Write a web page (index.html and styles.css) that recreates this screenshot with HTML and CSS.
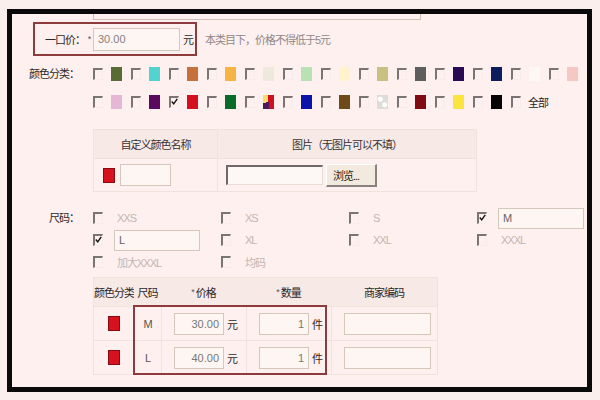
FILE: index.html
```html
<!DOCTYPE html>
<html lang="zh">
<head>
<meta charset="utf-8">
<title>发布宝贝</title>
<link rel="stylesheet" href="styles.css">
</head>
<body>
<div class="frame">
  <div class="cut"></div>

  <div class="price-row">
    <div class="price-box">
      <span class="pl">一口价：</span><span class="star">*</span>
      <div class="inp price-inp">30.00</div>
      <span class="unit">元</span>
    </div>
    <span class="hint">本类目下，价格不得低于5元</span>
  </div>

  <div class="field colors">
    <div class="flabel">颜色分类：</div>
    <div class="swatches">
      <div class="opt"><span class="cb"></span><span class="sw c01"></span></div>
      <div class="opt"><span class="cb"></span><span class="sw c02"></span></div>
      <div class="opt"><span class="cb"></span><span class="sw c03"></span></div>
      <div class="opt"><span class="cb"></span><span class="sw c04"></span></div>
      <div class="opt"><span class="cb"></span><span class="sw c05"></span></div>
      <div class="opt"><span class="cb"></span><span class="sw c06"></span></div>
      <div class="opt"><span class="cb"></span><span class="sw c07"></span></div>
      <div class="opt"><span class="cb"></span><span class="sw c08"></span></div>
      <div class="opt"><span class="cb"></span><span class="sw c09"></span></div>
      <div class="opt"><span class="cb"></span><span class="sw c10"></span></div>
      <div class="opt"><span class="cb"></span><span class="sw c11"></span></div>
      <div class="opt"><span class="cb"></span><span class="sw c12"></span></div>
      <div class="opt"><span class="cb"></span><span class="sw c13"></span></div>

      <div class="opt"><span class="cb"></span><span class="sw c14"></span></div>
      <div class="opt"><span class="cb"></span><span class="sw c15"></span></div>
      <div class="opt"><span class="cb on"><svg viewBox="0 0 9 9" width="9" height="9"><path d="M1 4.5 L3.5 7.5 L8 1" fill="none" stroke="#111" stroke-width="1.8"/></svg></span><span class="sw c16"></span></div>
      <div class="opt"><span class="cb"></span><span class="sw c17"></span></div>
      <div class="opt"><span class="cb"></span><span class="sw c18"></span></div>
      <div class="opt"><span class="cb"></span><span class="sw c19"></span></div>
      <div class="opt"><span class="cb"></span><span class="sw c20"></span></div>
      <div class="opt"><span class="cb"></span><span class="sw c21"></span></div>
      <div class="opt"><span class="cb"></span><span class="sw c22"></span></div>
      <div class="opt"><span class="cb"></span><span class="sw c23"></span></div>
      <div class="opt"><span class="cb"></span><span class="sw c24"></span></div>
      <div class="opt all"><span class="cb"></span><span class="all-label">全部</span></div>
    </div>
  </div>

  <div class="ctable">
    <div class="th">自定义颜色名称</div>
    <div class="th col2">图片（无图片可以不填）</div>
    <div class="td cell-name"><span class="rsw"></span><div class="inp name-inp"></div></div>
    <div class="td col2 cell-file"><div class="file"></div><div class="btn">浏览...</div></div>
  </div>

  <div class="field sizes">
    <div class="flabel">尺码：</div>
    <div class="sgrid">
      <div class="sopt"><span class="cb"></span><span class="slabel">XXS</span></div>
      <div class="sopt"><span class="cb"></span><span class="slabel">XS</span></div>
      <div class="sopt"><span class="cb"></span><span class="slabel">S</span></div>
      <div class="sopt"><span class="cb on"><svg viewBox="0 0 9 9" width="9" height="9"><path d="M1 4.5 L3.5 7.5 L8 1" fill="none" stroke="#111" stroke-width="1.8"/></svg></span><div class="inp sinp">M</div></div>
      <div class="sopt"><span class="cb on"><svg viewBox="0 0 9 9" width="9" height="9"><path d="M1 4.5 L3.5 7.5 L8 1" fill="none" stroke="#111" stroke-width="1.8"/></svg></span><div class="inp sinp">L</div></div>
      <div class="sopt"><span class="cb"></span><span class="slabel">XL</span></div>
      <div class="sopt"><span class="cb"></span><span class="slabel">XXL</span></div>
      <div class="sopt"><span class="cb"></span><span class="slabel">XXXL</span></div>
      <div class="sopt"><span class="cb"></span><span class="slabel">加大XXXL</span></div>
      <div class="sopt"><span class="cb"></span><span class="slabel">均码</span></div>
    </div>
  </div>

  <div class="btable">
    <div class="bh">颜色分类</div>
    <div class="bh">尺码</div>
    <div class="bh"><span class="req">*</span>价格</div>
    <div class="bh"><span class="req">*</span>数量</div>
    <div class="bh">商家编码</div>

    <div class="bd center"><span class="rsw"></span></div>
    <div class="bd center size-v">M</div>
    <div class="bd pad"><div class="inp num">30.00</div><span class="unit">元</span></div>
    <div class="bd pad"><div class="inp num">1</div><span class="unit">件</span></div>
    <div class="bd pad"><div class="inp code"></div></div>

    <div class="bd center"><span class="rsw"></span></div>
    <div class="bd center size-v">L</div>
    <div class="bd pad"><div class="inp num">40.00</div><span class="unit">元</span></div>
    <div class="bd pad"><div class="inp num">1</div><span class="unit">件</span></div>
    <div class="bd pad"><div class="inp code"></div></div>

    <div class="hl"></div>
  </div>
</div>
</body>
</html>
```

FILE: styles.css
```css
* { box-sizing: border-box; }
html, body { margin: 0; }
body {
  width: 600px;
  height: 400px;
  overflow: hidden;
  background: #fbefed;
  font-family: "Liberation Sans", "Noto Sans CJK SC", sans-serif;
  font-size: 11px;
  color: #3a3232;
  letter-spacing: -1px;
}
.frame {
  margin: 9px 8px 0 7px;
  height: 383px;
  border: 5px solid #0a0a0a;
  background: #fdf0ee;
  overflow: hidden;
}
.cut {
  margin-left: 81px;
  width: 328px;
  height: 6px;
  border: 1px solid #cfc2b4;
  border-top: 0;
}

/* price */
.price-row { display: flex; align-items: center; margin-top: 2px; }
.price-box {
  margin-left: 21px;
  width: 164px;
  height: 34px;
  border: 2px solid #8e3b3e;
  display: flex;
  align-items: center;
}
.pl { width: 50px; text-align: right; color: #2e2828; }
.star { width: 8px; text-align: center; color: #555; font-size: 9px; }
.inp {
  height: 23px;
  border: 1px solid #d5c8ba;
  background: #fdf6f3;
  display: flex;
  align-items: center;
  padding: 0 4px;
  color: #8a8080;
  letter-spacing: 0;
  flex: none;
}
.price-inp { width: 87px; }
.unit { margin-left: 3px; color: #2e2828; }
.hint { margin-left: 8px; color: #918787; }

/* colors */
.field { display: flex; }
.flabel {
  width: 81px;
  padding-right: 14px;
  text-align: right;
  line-height: 28px;
  flex: none;
  color: #2e2828;
}
.colors { margin-top: 4px; }
.swatches { display: flex; flex-wrap: wrap; width: 494px; }
.opt { width: 38px; height: 28px; display: flex; align-items: center; }
.cb {
  width: 10px;
  height: 12px;
  border-top: 2px solid #7a7474;
  border-left: 2px solid #7a7474;
  border-right: 1px solid #f6eceb;
  border-bottom: 1px solid #f6eceb;
  flex: none;
  display: flex;
  align-items: flex-end;
  justify-content: center;
}
.cb svg { display: block; margin-bottom: 1px; }
.sw { width: 11px; height: 14px; margin-left: 8px; flex: none; }
.all { width: 60px; }
.all-label { margin-left: 7px; color: #2a2424; }

.c01 { background: #586a36; }
.c02 { background: #52d3cf; }
.c03 { background: #c8703c; }
.c04 { background: #f6b444; }
.c05 { background: #efe8dc; }
.c06 { background: #b8e2b4; }
.c07 { background: #fff2cc; }
.c08 { background: #c9c182; }
.c09 { background: #5e5e5e; }
.c10 { background: #2a0a52; }
.c11 { background: #0c1c5c; }
.c12 { background: #fdf8f6; }
.c13 { background: #f6c8c4; }
.c14 { background: #e6b6d6; }
.c15 { background: #5a0a5e; }
.c16 { background: #d4101e; }
.c17 { background: #0a6a28; }
.c18 { background: conic-gradient(#d01020 0 50%, #4a1a5a 50% 72%, #f6dc6a 72%); }
.c19 { background: #0a14a8; }
.c20 { background: #6e4a18; }
.c21 { background: radial-gradient(circle at 30% 30%, #fff 2px, transparent 3px), radial-gradient(circle at 70% 70%, #fff 2px, transparent 3px), #dcdcd8; }
.c22 { background: #800a14; }
.c23 { background: #fce440; }
.c24 { background: #050505; }

/* custom colour table */
.ctable {
  margin: 13px 0 0 81px;
  width: 384px;
  display: grid;
  grid-template-columns: 123px 1fr;
  border: 1px solid #f1e2dd;
}
.th {
  height: 28px;
  background: #f7e9e5;
  display: flex;
  align-items: center;
  justify-content: center;
}
.td {
  height: 33px;
  display: flex;
  align-items: center;
  border-top: 1px solid #f1e2dd;
}
.col2 { border-left: 1px solid #f1e2dd; }
.rsw {
  width: 12px;
  height: 15px;
  background: #d6121f;
  border: 1px solid #8a0a12;
  flex: none;
}
.cell-name { padding-left: 9px; }
.name-inp { margin-left: 5px; width: 51px; height: 22px; }
.cell-file { padding-left: 8px; }
.file {
  width: 97px;
  height: 20px;
  border-top: 2px solid #6e6868;
  border-left: 2px solid #6e6868;
  border-right: 1px solid #e8dcd6;
  border-bottom: 1px solid #e8dcd6;
  background: #fdf8f6;
}
.btn {
  margin-left: 3px;
  width: 51px;
  height: 23px;
  background: #f3eadf;
  border-top: 1px solid #fff;
  border-left: 1px solid #fff;
  border-right: 2px solid #8a8280;
  border-bottom: 2px solid #8a8280;
  display: flex;
  align-items: center;
  padding-left: 6px;
  color: #222;
}

/* sizes */
.sizes { margin-top: 15px; }
.sizes .flabel { line-height: 22px; }
.sgrid {
  display: grid;
  grid-template-columns: repeat(4, 128px);
  grid-auto-rows: 22px;
}
.sopt { display: flex; align-items: center; }
.slabel { margin-left: 14px; color: #c2b6b2; }
.sinp { margin-left: 11px; width: 86px; height: 21px; color: #6a6262; }

/* sku table */
.btable {
  position: relative;
  margin: 4px 0 0 81px;
  width: 345px;
  display: grid;
  grid-template-columns: 40px 27px 85px 85px 106px;
  border: 1px solid #f1e2dd;
}
.bh {
  height: 28px;
  background: #f7e9e5;
  display: flex;
  align-items: center;
  justify-content: center;
  white-space: nowrap;
  color: #2e2828;
}
.req { font-size: 9px; margin-right: 2px; color: #555; }
.bd {
  height: 34px;
  display: flex;
  align-items: center;
  border-top: 1px solid #f1e2dd;
  border-left: 1px solid #f1e2dd;
}
.bd.center { justify-content: center; }
.btable .bd:nth-child(5n+1) { border-left: 0; }
.size-v { color: #555; letter-spacing: 0; }
.pad { padding-left: 12px; }
.num { width: 50px; height: 22px; justify-content: flex-end; color: #777; }
.code { width: 87px; height: 22px; }
.hl {
  position: absolute;
  left: 39px;
  top: 27px;
  width: 194px;
  height: 70px;
  border: 2px solid #8e3b3e;
}
```
